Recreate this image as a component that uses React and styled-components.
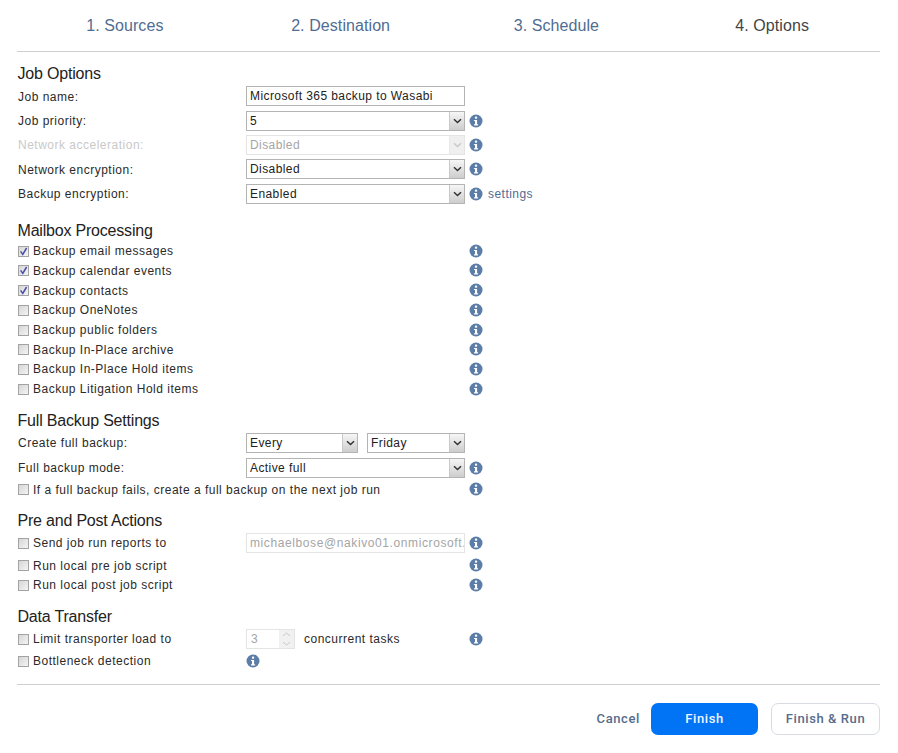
import React from 'react'
import styled, { createGlobalStyle } from 'styled-components'

const GlobalStyle = createGlobalStyle`
  html, body {
    margin: 0;
    background: #fff;
  }
  body {
    font-family: "Liberation Sans", Arial, sans-serif;
    font-size: 12px;
    color: #222;
  }
`

const Page = styled.div`
  width: 898px;
  height: 753px;
  padding: 0 18px 0 17px;
  box-sizing: border-box;
  overflow: hidden;
`

const Steps = styled.div`
  display: grid;
  grid-template-columns: repeat(4, 1fr);
  height: 51px;
  border-bottom: 1px solid #cfcfcf;
  align-items: center;
`

const Step = styled.div`
  text-align: center;
  font-size: 16px;
  letter-spacing: 0.08px;
  padding-top: 1px;
  color: ${p => (p.$active ? '#444' : '#4f6d92')};
`

const Section = styled.section`
  margin-top: ${p => p.$top}px;
`

const Heading = styled.h3`
  margin: 0;
  height: 22px;
  line-height: 24px;
  padding-left: 0.5px;
  font-size: 16px;
  font-weight: normal;
  letter-spacing: -0.2px;
  color: #222;
`

const Row = styled.div`
  display: grid;
  grid-template-columns: 229px 219px 23px auto;
  align-items: center;
  height: ${p => p.$h}px;
`

const Label = styled.label`
  display: flex;
  align-items: center;
  gap: 4px;
  padding-left: 1px;
  padding-top: 1px;
  letter-spacing: 0.5px;
  white-space: nowrap;
  color: ${p => (p.$off ? '#c9c9c9' : '#2a2a2a')};
  grid-column: ${p => (p.$wide ? 'span 2' : 'auto')};
`

const Box = styled.span`
  box-sizing: border-box;
  width: 11px;
  height: 11px;
  flex: none;
  border: 1px solid #a3a3a3;
  background: linear-gradient(135deg, #d6d6d6, #f4f4f4);
  display: flex;
  align-items: center;
  justify-content: center;
`

const Field = styled.div`
  box-sizing: border-box;
  height: 20px;
  width: ${p => p.$w || 219}px;
  display: flex;
  align-items: center;
  justify-content: space-between;
  border: 1px solid ${p => (p.$off ? '#e4e4e4' : '#b4b4b4')};
  background: #fff;
  padding-left: 3px;
  letter-spacing: ${p => p.$spread || 0.42}px;
  white-space: nowrap;
  overflow: hidden;
  color: ${p => (p.$off ? '#a5a5a5' : '#222')};
`

const Arrow = styled.span`
  width: 14px;
  height: 18px;
  flex: none;
  display: flex;
  align-items: center;
  justify-content: center;
  background: ${p => (p.$off ? '#efefef' : 'linear-gradient(#f6f6f6, #cdcdcd)')};
  border-left: 1px solid ${p => (p.$off ? '#e8e8e8' : '#c9c9c9')};
`

const Pair = styled.div`
  display: flex;
  justify-content: space-between;
`

const Spin = styled.div`
  display: flex;
  align-items: center;
  width: 219px;
`

const SpinBox = styled.div`
  box-sizing: border-box;
  width: 49px;
  height: 20px;
  display: flex;
  align-items: center;
  justify-content: space-between;
  border: 1px solid #e4e4e4;
  padding-left: 4px;
  color: #a5a5a5;
`

const SpinArrows = styled.span`
  width: 15px;
  height: 18px;
  background: #f1f1f1;
  display: flex;
  flex-direction: column;
  align-items: center;
  justify-content: space-around;
`

const SpinText = styled.span`
  margin-left: 9px;
  letter-spacing: 0.5px;
  color: #2a2a2a;
`

const InfoCell = styled.span`
  display: flex;
  align-items: center;
  padding-left: ${p => (p.$flush ? 0 : 4)}px;
`

const Link = styled.a`
  color: #4f6d92;
  letter-spacing: 0.46px;
  padding-top: 1px;
`

const Divider = styled.hr`
  margin: 13px 0 0;
  border: 0;
  border-top: 1px solid #cfcfcf;
`

const Footer = styled.footer`
  display: flex;
  justify-content: flex-end;
  align-items: center;
  padding-top: 18px;
`

const Cancel = styled.a`
  font-family: Roboto, sans-serif;
  font-weight: 500;
  font-size: 13px;
  letter-spacing: 0.6px;
  color: #566c8c;
  margin-right: 11px;
`

const Button = styled.button`
  box-sizing: border-box;
  width: ${p => p.$w}px;
  height: 32px;
  margin-left: ${p => p.$left}px;
  border-radius: 7px;
  font-family: Roboto, sans-serif;
  font-weight: 500;
  font-size: 13px;
  letter-spacing: 0.6px;
  color: ${p => (p.$primary ? '#f0f6ff' : '#566c8c')};
  background: ${p => (p.$primary ? '#0074f5' : '#fff')};
  border: ${p => (p.$primary ? '0' : '1px solid #d8dce2')};
`

const Info = () => (
  <svg width="14" height="14" viewBox="0 0 14 14">
    <circle cx="7" cy="7" r="6.5" fill="#5b7da8" />
    <rect x="5.9" y="2.6" width="2.3" height="2.1" rx="0.8" fill="#fff" />
    <path d="M5 6h3.1v4.3H9.1v1.1H5v-1.1h1v-3.2H5z" fill="#fff" />
  </svg>
)

const Chevron = ({ off }) => (
  <svg width="9" height="6" viewBox="0 0 9 6">
    <path d="M1 1.2l3.5 3.3L8 1.2" fill="none" stroke={off ? '#c8c8c8' : '#333'} strokeWidth="1.5" />
  </svg>
)

const Check = ({ on, wide = true, children }) => (
  <Label $wide={wide}>
    <Box>
      {on && (
        <svg width="9" height="9" viewBox="0 0 9 9">
          <path d="M1.6 4.4l2.2 3L7.6 1" fill="none" stroke="#4a4fa8" strokeWidth="1.5" />
        </svg>
      )}
    </Box>
    {children}
  </Label>
)

const Select = ({ value, off, w }) => (
  <Field $off={off} $w={w}>
    {value}
    <Arrow $off={off}><Chevron off={off} /></Arrow>
  </Field>
)

const mailbox = [
  ['Backup email messages', true],
  ['Backup calendar events', true],
  ['Backup contacts', true],
  ['Backup OneNotes'],
  ['Backup public folders'],
  ['Backup In-Place archive'],
  ['Backup In-Place Hold items'],
  ['Backup Litigation Hold items'],
]

export default function App() {
  return (
    <Page>
      <GlobalStyle />
      <Steps>
        <Step>1. Sources</Step>
        <Step>2. Destination</Step>
        <Step>3. Schedule</Step>
        <Step $active>4. Options</Step>
      </Steps>

      <Section $top={10}>
        <Heading>Job Options</Heading>
        <Row $h={24.4}>
          <Label>Job name:</Label>
          <Field>Microsoft 365 backup to Wasabi</Field>
        </Row>
        <Row $h={24.4}>
          <Label>Job priority:</Label>
          <Select value="5" />
          <InfoCell><Info /></InfoCell>
        </Row>
        <Row $h={24.4}>
          <Label $off>Network acceleration:</Label>
          <Select value="Disabled" off />
          <InfoCell><Info /></InfoCell>
        </Row>
        <Row $h={24.4}>
          <Label>Network encryption:</Label>
          <Select value="Disabled" />
          <InfoCell><Info /></InfoCell>
        </Row>
        <Row $h={24.4}>
          <Label>Backup encryption:</Label>
          <Select value="Enabled" />
          <InfoCell><Info /></InfoCell>
          <Link>settings</Link>
        </Row>
      </Section>

      <Section $top={13}>
        <Heading>Mailbox Processing</Heading>
        {mailbox.map(([text, on]) => (
          <Row $h={19.7} key={text}>
            <Check on={on}>{text}</Check>
            <InfoCell><Info /></InfoCell>
          </Row>
        ))}
      </Section>

      <Section $top={10.4}>
        <Heading>Full Backup Settings</Heading>
        <Row $h={24}>
          <Label>Create full backup:</Label>
          <Pair>
            <Select value="Every" w={112} />
            <Select value="Friday" w={98} />
          </Pair>
        </Row>
        <Row $h={26}>
          <Label>Full backup mode:</Label>
          <Select value="Active full" />
          <InfoCell><Info /></InfoCell>
        </Row>
        <Row $h={17}>
          <Check>If a full backup fails, create a full backup on the next job run</Check>
          <InfoCell><Info /></InfoCell>
        </Row>
      </Section>

      <Section $top={11}>
        <Heading>Pre and Post Actions</Heading>
        <Row $h={24}>
          <Check wide={false}>Send job run reports to</Check>
          <Field $off $spread={0.6}>michaelbose@nakivo01.onmicrosoft.com</Field>
          <InfoCell><Info /></InfoCell>
        </Row>
        <Row $h={21}>
          <Check>Run local pre job script</Check>
          <InfoCell><Info /></InfoCell>
        </Row>
        <Row $h={18}>
          <Check>Run local post job script</Check>
          <InfoCell><Info /></InfoCell>
        </Row>
      </Section>

      <Section $top={11}>
        <Heading>Data Transfer</Heading>
        <Row $h={24}>
          <Check wide={false}>Limit transporter load to</Check>
          <Spin>
            <SpinBox>
              3
              <SpinArrows>
                <svg width="9" height="5" viewBox="0 0 9 5"><path d="M1 4l3.5-3L8 4" fill="none" stroke="#c8c8c8" /></svg>
                <svg width="9" height="5" viewBox="0 0 9 5"><path d="M1 1l3.5 3L8 1" fill="none" stroke="#c8c8c8" /></svg>
              </SpinArrows>
            </SpinBox>
            <SpinText>concurrent tasks</SpinText>
          </Spin>
          <InfoCell><Info /></InfoCell>
        </Row>
        <Row $h={20}>
          <Check wide={false}>Bottleneck detection</Check>
          <InfoCell $flush><Info /></InfoCell>
        </Row>
      </Section>

      <Divider />
      <Footer>
        <Cancel>Cancel</Cancel>
        <Button $primary $w={107} $left={0}>Finish</Button>
        <Button $w={109} $left={13}>Finish &amp; Run</Button>
      </Footer>
    </Page>
  )
}
